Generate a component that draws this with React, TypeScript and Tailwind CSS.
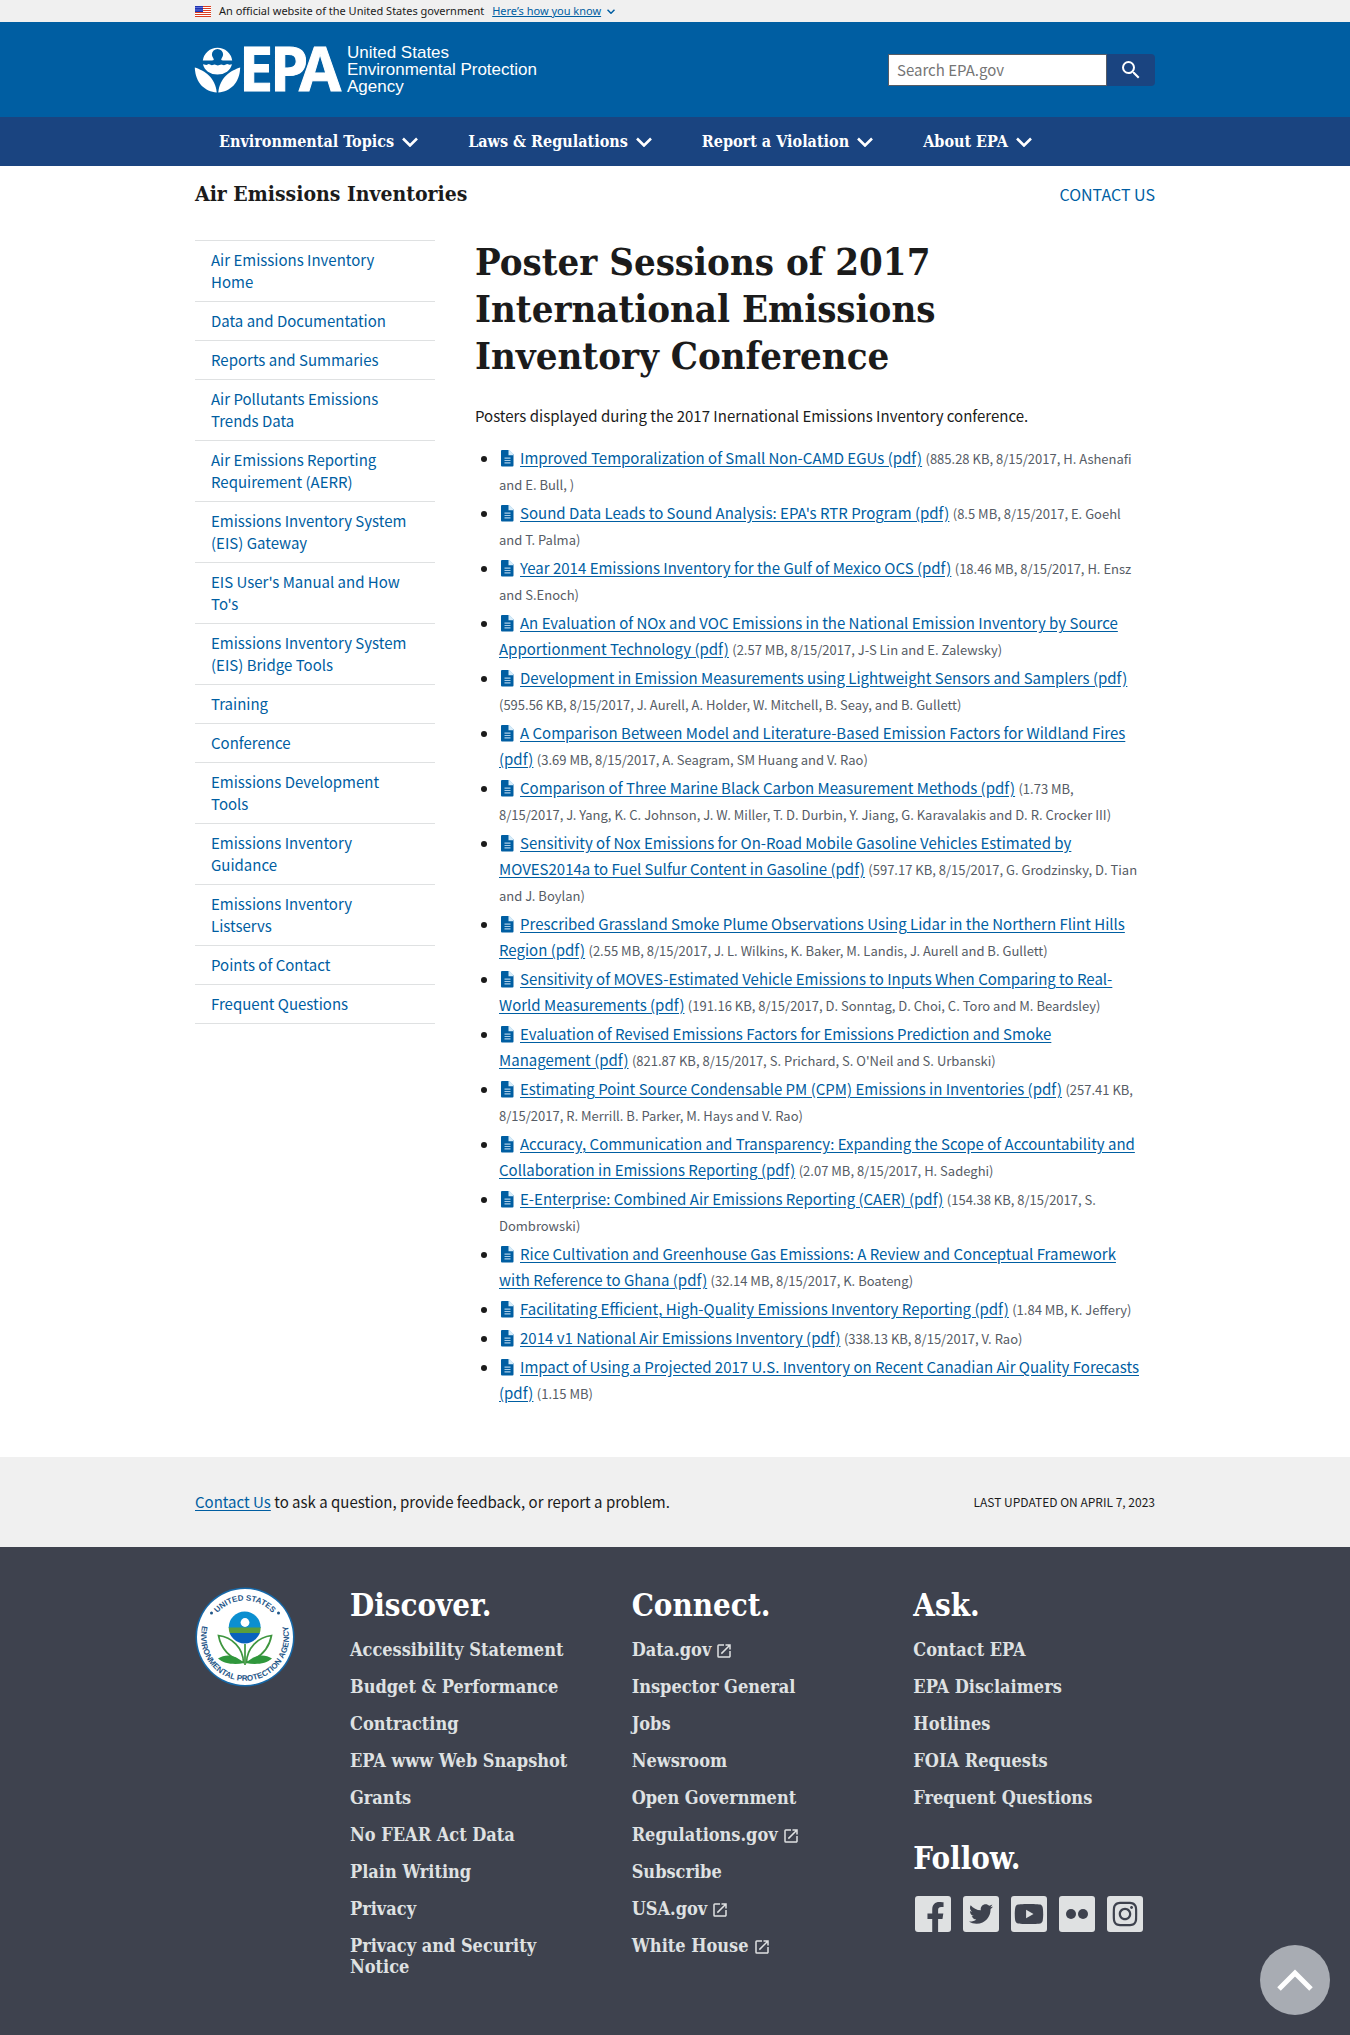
import React from "react";
import { MdOpenInNew, MdSearch } from "react-icons/md";
import { FaFacebookF, FaInstagram, FaTwitter, FaYoutube } from "react-icons/fa";

const SERIF = "font-['DejaVu_Serif_Condensed','DejaVu_Serif',serif]";

const navItems = ["Environmental Topics", "Laws & Regulations", "Report a Violation", "About EPA"];

const sideLinks = [
  "Air Emissions Inventory Home",
  "Data and Documentation",
  "Reports and Summaries",
  "Air Pollutants Emissions Trends Data",
  "Air Emissions Reporting Requirement (AERR)",
  "Emissions Inventory System (EIS) Gateway",
  "EIS User's Manual and How To's",
  "Emissions Inventory System (EIS) Bridge Tools",
  "Training",
  "Conference",
  "Emissions Development Tools",
  "Emissions Inventory Guidance",
  "Emissions Inventory Listservs",
  "Points of Contact",
  "Frequent Questions",
];

const posters: [string, string][] = [
  ["Improved Temporalization of Small Non-CAMD EGUs (pdf)", "(885.28 KB, 8/15/2017, H. Ashenafi and E. Bull, )"],
  ["Sound Data Leads to Sound Analysis: EPA's RTR Program (pdf)", "(8.5 MB, 8/15/2017, E. Goehl and T. Palma)"],
  ["Year 2014 Emissions Inventory for the Gulf of Mexico OCS (pdf)", "(18.46 MB, 8/15/2017, H. Ensz and S.Enoch)"],
  ["An Evaluation of NOx and VOC Emissions in the National Emission Inventory by Source Apportionment Technology (pdf)", "(2.57 MB, 8/15/2017, J-S Lin and E. Zalewsky)"],
  ["Development in Emission Measurements using Lightweight Sensors and Samplers (pdf)", "(595.56 KB, 8/15/2017, J. Aurell, A. Holder, W. Mitchell, B. Seay, and B. Gullett)"],
  ["A Comparison Between Model and Literature-Based Emission Factors for Wildland Fires (pdf)", "(3.69 MB, 8/15/2017, A. Seagram, SM Huang and V. Rao)"],
  ["Comparison of Three Marine Black Carbon Measurement Methods (pdf)", "(1.73 MB, 8/15/2017,\u00a0J.\u00a0Yang, K. C. Johnson, J. W. Miller, T. D. Durbin, Y. Jiang, G. Karavalakis and D. R. Crocker III)"],
  ["Sensitivity of Nox Emissions for On-Road Mobile Gasoline Vehicles Estimated by MOVES2014a to Fuel Sulfur Content in Gasoline (pdf)", "(597.17 KB, 8/15/2017, G. Grodzinsky, D. Tian and J. Boylan)"],
  ["Prescribed Grassland Smoke Plume Observations Using Lidar in the Northern Flint Hills Region (pdf)", "(2.55 MB, 8/15/2017, J. L. Wilkins, K. Baker, M. Landis, J. Aurell and B. Gullett)"],
  ["Sensitivity of MOVES-Estimated Vehicle Emissions to Inputs When Comparing to Real-World Measurements (pdf)", "(191.16 KB, 8/15/2017, D. Sonntag, D. Choi, C. Toro and M. Beardsley)"],
  ["Evaluation of Revised Emissions Factors for Emissions Prediction and Smoke Management (pdf)", "(821.87 KB, 8/15/2017, S. Prichard, S. O'Neil and S. Urbanski)"],
  ["Estimating Point Source Condensable PM (CPM) Emissions in Inventories (pdf)", "(257.41 KB, 8/15/2017, R. Merrill. B. Parker, M. Hays and V. Rao)"],
  ["Accuracy, Communication and Transparency: Expanding the Scope of Accountability and Collaboration in Emissions Reporting (pdf)", "(2.07 MB, 8/15/2017, H. Sadeghi)"],
  ["E-Enterprise: Combined Air Emissions Reporting (CAER) (pdf)", "(154.38 KB, 8/15/2017, S. Dombrowski)"],
  ["Rice Cultivation and Greenhouse Gas Emissions: A Review and Conceptual Framework with Reference to Ghana (pdf)", "(32.14 MB, 8/15/2017, K. Boateng)"],
  ["Facilitating Efficient, High-Quality Emissions Inventory Reporting (pdf)", "(1.84 MB, K. Jeffery)"],
  ["2014 v1 National Air Emissions Inventory (pdf)", "(338.13 KB, 8/15/2017, V. Rao)"],
  ["Impact of Using a Projected 2017 U.S. Inventory on Recent Canadian Air Quality Forecasts (pdf)", "(1.15 MB)"],
];

const discover = [
  "Accessibility Statement",
  "Budget & Performance",
  "Contracting",
  "EPA www Web Snapshot",
  "Grants",
  "No FEAR Act Data",
  "Plain Writing",
  "Privacy",
  "Privacy and Security Notice",
];
const connect = [
  "Data.gov",
  "Inspector General",
  "Jobs",
  "Newsroom",
  "Open Government",
  "Regulations.gov",
  "Subscribe",
  "USA.gov",
  "White House",
];
const external = new Set(["Data.gov", "Regulations.gov", "USA.gov", "White House"]);
const ask = ["Contact EPA", "EPA Disclaimers", "Hotlines", "FOIA Requests", "Frequent Questions"];

function Flag() {
  return (
    <svg viewBox="0 0 16 11" className="h-[11px] w-4" aria-hidden="true">
      <rect width="16" height="11" fill="#fff" />
      {[0, 2, 4, 6, 8, 10].map((y) => (
        <rect key={y} y={y} width="16" height="1" fill="#db3e1f" />
      ))}
      <rect width="8" height="6" fill="#1e33b1" />
      {[1, 3, 5, 7].map((x) => (
        <g key={x} fill="#a5afff">
          <rect x={x - 0.5} y="1" width="1" height="1" />
          <rect x={x - 0.5} y="3.5" width="1" height="1" />
        </g>
      ))}
    </svg>
  );
}

function Chevron({ className, width = 2.6 }: { className: string; width?: number }) {
  return (
    <svg viewBox="0 0 16 10" className={className} fill="none" stroke="currentColor" strokeWidth={width} aria-hidden="true">
      <path d="M1 1.5 8 8.5 15 1.5" />
    </svg>
  );
}

function EpaLogo() {
  return (
    <svg viewBox="195 45 149 50" className="h-[50px] w-[149px] shrink-0 overflow-visible" role="img" aria-label="EPA">
      <g fill="#fff">
        <path d="M202.800 60.600a14.800 14.600 0 0 1 29.400 0h-9.200c-1.700 0-2.300-1-1.300-2.300a5.600 5.600 0 1 0-8.400 0c1 1.300.4 2.300-1.300 2.300z" />
        <path d="M203 64.300l3.400.6 2.400-.9 3 1.300 2.800-.8 3.200.9 3.400-1 2.800.8 3.200-1.200 2.400.8 2.300-.5a14.600 12 0 0 1-28.900 0z" />
        <path d="M194.800 67.500c9.500 3 20.700 10 21.900 25-11.700-1-21.200-9-21.900-25z" />
        <path d="M240.200 67.500c-9.500 3-20.700 10-21.900 25 11.700-1 21.200-9 21.900-25z" />
      </g>
      <g fill="#fff" stroke="#fff" strokeWidth="1" fontFamily="Open Sans" fontWeight="700" fontSize="61">
        <text x="239" y="90.500">E</text>
        <text x="270" y="90.500">P</text>
        <text x="299" y="90.500">A</text>
      </g>
    </svg>
  );
}

function FileIcon() {
  return (
    <svg viewBox="0 0 14 18" className="mr-1.5 ml-px inline-block h-[18px] w-[14px] -translate-y-0.5" aria-hidden="true">
      <path d="M2 1h7l4.500 4.500V16.500a1 1 0 0 1-1 1H2a1 1 0 0 1-1-1V2a1 1 0 0 1 1-1z" fill="#005ea2" />
      <path d="M8.500 1h1L13.500 5v1.200h-5z" fill="#d6ecfa" />
      <path d="M4.500 8.500h6v1.200h-6zM4.500 10.900h6v1.200h-6zM4.500 13.300h6v1.200h-6z" fill="#a9cde8" />
    </svg>
  );
}

function Seal() {
  return (
    <svg viewBox="-50 -50 100 100" className="h-[100px] w-[100px]" role="img" aria-label="EPA seal">
      <defs>
        <path id="seal-top" d="M-36.500 0A36.500 36.500 0 0 1 36.500 0" />
        <path id="seal-bottom" d="M-39.500-19.500A44 44 0 1 0 39.500-19.500" />
        <clipPath id="seal-globe">
          <circle cx="-.3" cy="-9.500" r="16" />
        </clipPath>
      </defs>
      <circle r="49.500" fill="#1668a8" />
      <circle r="48" fill="#fff" />
      <g fill="#1f5688" fontFamily="Liberation Sans" fontWeight="700" fontSize="8">
        <text textAnchor="middle">
          <textPath href="#seal-top" startOffset="50%">UNITED STATES</textPath>
        </text>
        <text textAnchor="middle">
          <textPath href="#seal-bottom" startOffset="50%">ENVIRONMENTAL PROTECTION AGENCY</textPath>
        </text>
      </g>
      <circle cx="-33.500" cy="-24" r="1.500" fill="#1f5688" />
      <circle cx="33.500" cy="-24" r="1.500" fill="#1f5688" />
      <g clipPath="url(#seal-globe)">
        <rect x="-18" y="-27" width="36" height="18" fill="#0b8fd0" />
        <rect x="-18" y="-9.500" width="36" height="6" fill="#5a9e3c" />
        <rect x="-18" y="-4" width="36" height="12" fill="#0a62bd" />
      </g>
      <circle cy="-14.500" r="4.400" fill="#fff" />
      <g fill="#fff" stroke="#3f963f" strokeWidth="1.700">
        <path d="M-26.500-1.500C-24 12-15 21-1.500 25.500-2 11-13 0-26.500-1.500z" />
        <path d="M26.500-1.500C24 12 15 21 1.500 25.500 2 11 13 0 26.500-1.500z" />
        <path d="M0 7v21" fill="none" />
      </g>
      <g fill="#2f973c">
        <path d="M-27 21.500c8-5 17-4 26 4.500-9 2-20 1-26-4.500z" />
        <path d="M27 21.500c-8-5-17-4-26 4.500 9 2 20 1 26-4.500z" />
      </g>
    </svg>
  );
}

function FooterList({ title, items }: { title: string; items: string[] }) {
  return (
    <nav aria-label={title}>
      <h2 className={`text-[31px] leading-9 font-bold text-white ${SERIF}`}>{title}</h2>
      <ul className={`mt-4 flex flex-col gap-4 text-[18px] leading-[21px] font-bold text-[#dfe1e2] ${SERIF}`}>
        {items.map((item) => (
          <li key={item}>
            <a href="#" className="hover:underline">
              {item}
              {external.has(item) && <MdOpenInNew className="ml-1 inline-block size-[18px] align-[-4px]" />}
            </a>
          </li>
        ))}
      </ul>
    </nav>
  );
}

const box = "flex size-9 justify-center rounded-[3px] bg-[#dfe1e2] text-[#3e424e]";

function Social() {
  return (
    <ul className="mt-5 ml-0.5 flex gap-3">
      <li>
        <a href="#" aria-label="Facebook" className={`${box} items-end pl-1`}>
          <FaFacebookF className="h-[30px] w-[19px]" />
        </a>
      </li>
      <li>
        <a href="#" aria-label="Twitter" className={`${box} items-center`}>
          <FaTwitter className="size-6" />
        </a>
      </li>
      <li>
        <a href="#" aria-label="YouTube" className={`${box} items-center`}>
          <FaYoutube className="size-[30px]" />
        </a>
      </li>
      <li>
        <a href="#" aria-label="Flickr" className={`${box} items-center gap-0.5`}>
          <span className="size-2.5 rounded-full bg-current" />
          <span className="size-2.5 rounded-full bg-current" />
        </a>
      </li>
      <li>
        <a href="#" aria-label="Instagram" className={`${box} items-center`}>
          <FaInstagram className="size-7" />
        </a>
      </li>
    </ul>
  );
}

export default function App() {
  return (
    <div className="flex min-h-screen flex-col bg-white font-['Noto_Sans_CJK_SC',sans-serif] text-[15px] leading-[26px] text-[#1b1b1b]">
      <div className="bg-[#f0f0f0]">
        <div className="mx-auto flex max-w-[960px] items-center font-['Noto_Sans',sans-serif] text-[11px] leading-[22px]">
          <Flag />
          <span className="ml-2">An official website of the United States government</span>
          <button type="button" className="ml-2 flex items-center gap-1.5 text-[#005ea2]">
            <span className="underline">Here’s how you know</span>
            <Chevron className="h-[5px] w-2" width={3} />
          </button>
        </div>
      </div>

      <header>
        <div className="bg-[#005ea2]">
          <div className="mx-auto flex max-w-[960px] items-center justify-between py-[22px]">
            <a href="#" className="flex items-center gap-[3px] text-white">
              <EpaLogo />
              <span className="font-['Liberation_Sans',sans-serif] text-[17px] leading-[17px]">
                United States
                <br />
                Environmental Protection
                <br />
                Agency
              </span>
            </a>
            <form className="flex" role="search" onSubmit={(e) => e.preventDefault()}>
              <input
                type="search"
                aria-label="Search EPA.gov"
                placeholder="Search EPA.gov"
                className="h-8 w-[219px] border border-[#565c65] bg-white px-2 text-[15px] outline-none placeholder:text-[#757575]"
              />
              <button type="submit" aria-label="Search" className="flex h-8 w-12 items-center justify-center rounded-r-sm bg-[#1a4480] text-white">
                <MdSearch className="size-6" />
              </button>
            </form>
          </div>
        </div>
        <nav aria-label="Primary" className="bg-[#1a4480]">
          <ul className={`mx-auto flex max-w-[960px] gap-0.5 text-[16px] leading-[49px] font-bold text-white ${SERIF}`}>
            {navItems.map((item) => (
              <li key={item}>
                <button type="button" className="flex items-center gap-2 px-6">
                  {item}
                  <Chevron className="h-2.5 w-4" />
                </button>
              </li>
            ))}
          </ul>
        </nav>
      </header>

      <main className="mx-auto w-full max-w-[960px] pb-12">
        <div className="flex items-center justify-between pt-4 leading-6">
          <p className={`text-[21px] font-bold ${SERIF}`}>Air Emissions Inventories</p>
          <a href="#" className="text-[16px] text-[#005ea2]">
            CONTACT US
          </a>
        </div>

        <div className="mt-[34px] flex gap-10">
          <nav aria-label="Side navigation" className="w-[240px] shrink-0">
            <ul className="border-b border-[#dfe1e2] leading-[22px]">
              {sideLinks.map((item) => (
                <li key={item} className="border-t border-[#dfe1e2]">
                  <a href="#" className="block py-2 pr-6 pl-4 text-[#005ea2]">
                    {item}
                  </a>
                </li>
              ))}
            </ul>
          </nav>

          <article className="-mt-0.5 min-w-0 flex-1">
            <h1 className={`max-w-[560px] text-[38px] leading-[47px] font-bold ${SERIF}`}>
              Poster Sessions of 2017 International Emissions Inventory Conference
            </h1>
            <p className="mt-6">Posters displayed during the 2017 Inernational Emissions Inventory conference.</p>
            <ul className="mt-4 list-disc pr-3 pl-6">
              {posters.map(([title, meta]) => (
                <li key={title} className="mb-[3px]">
                  <FileIcon />
                  <a href="#" className="text-[#005ea2] underline underline-offset-2">
                    {title}
                  </a>{" "}
                  <span className="text-[13px] leading-4 text-[#565c65]">{meta}</span>
                </li>
              ))}
            </ul>
          </article>
        </div>
      </main>

      <div className="bg-[#f0f0f0]">
        <div className="mx-auto flex max-w-[960px] items-center justify-between py-8">
          <p>
            <a href="#" className="text-[#005ea2] underline underline-offset-2">
              Contact Us
            </a>{" "}
            to ask a question, provide feedback, or report a problem.
          </p>
          <p className="text-[12px]">LAST UPDATED ON APRIL 7, 2023</p>
        </div>
      </div>

      <footer className="grow bg-[#3e424e]">
        <div className="mx-auto flex max-w-[960px] pt-10 pb-12">
          <div className="w-[155px] shrink-0">
            <Seal />
          </div>
          <div className="grid flex-1 grid-cols-3 gap-10">
            <FooterList title="Discover." items={discover} />
            <FooterList title="Connect." items={connect} />
            <div>
              <FooterList title="Ask." items={ask} />
              <h2 className={`mt-8 text-[31px] leading-9 font-bold text-white ${SERIF}`}>Follow.</h2>
              <Social />
            </div>
          </div>
        </div>
      </footer>

      <button
        type="button"
        aria-label="Back to top"
        className="fixed right-5 bottom-5 flex size-[70px] items-center justify-center rounded-full bg-[#a8acb3] text-white"
      >
        <svg viewBox="0 0 36 22" className="h-[22px] w-9" fill="none" stroke="currentColor" strokeWidth="5" aria-hidden="true">
          <path d="M2 20 18 4l16 16" />
        </svg>
      </button>
    </div>
  );
}
